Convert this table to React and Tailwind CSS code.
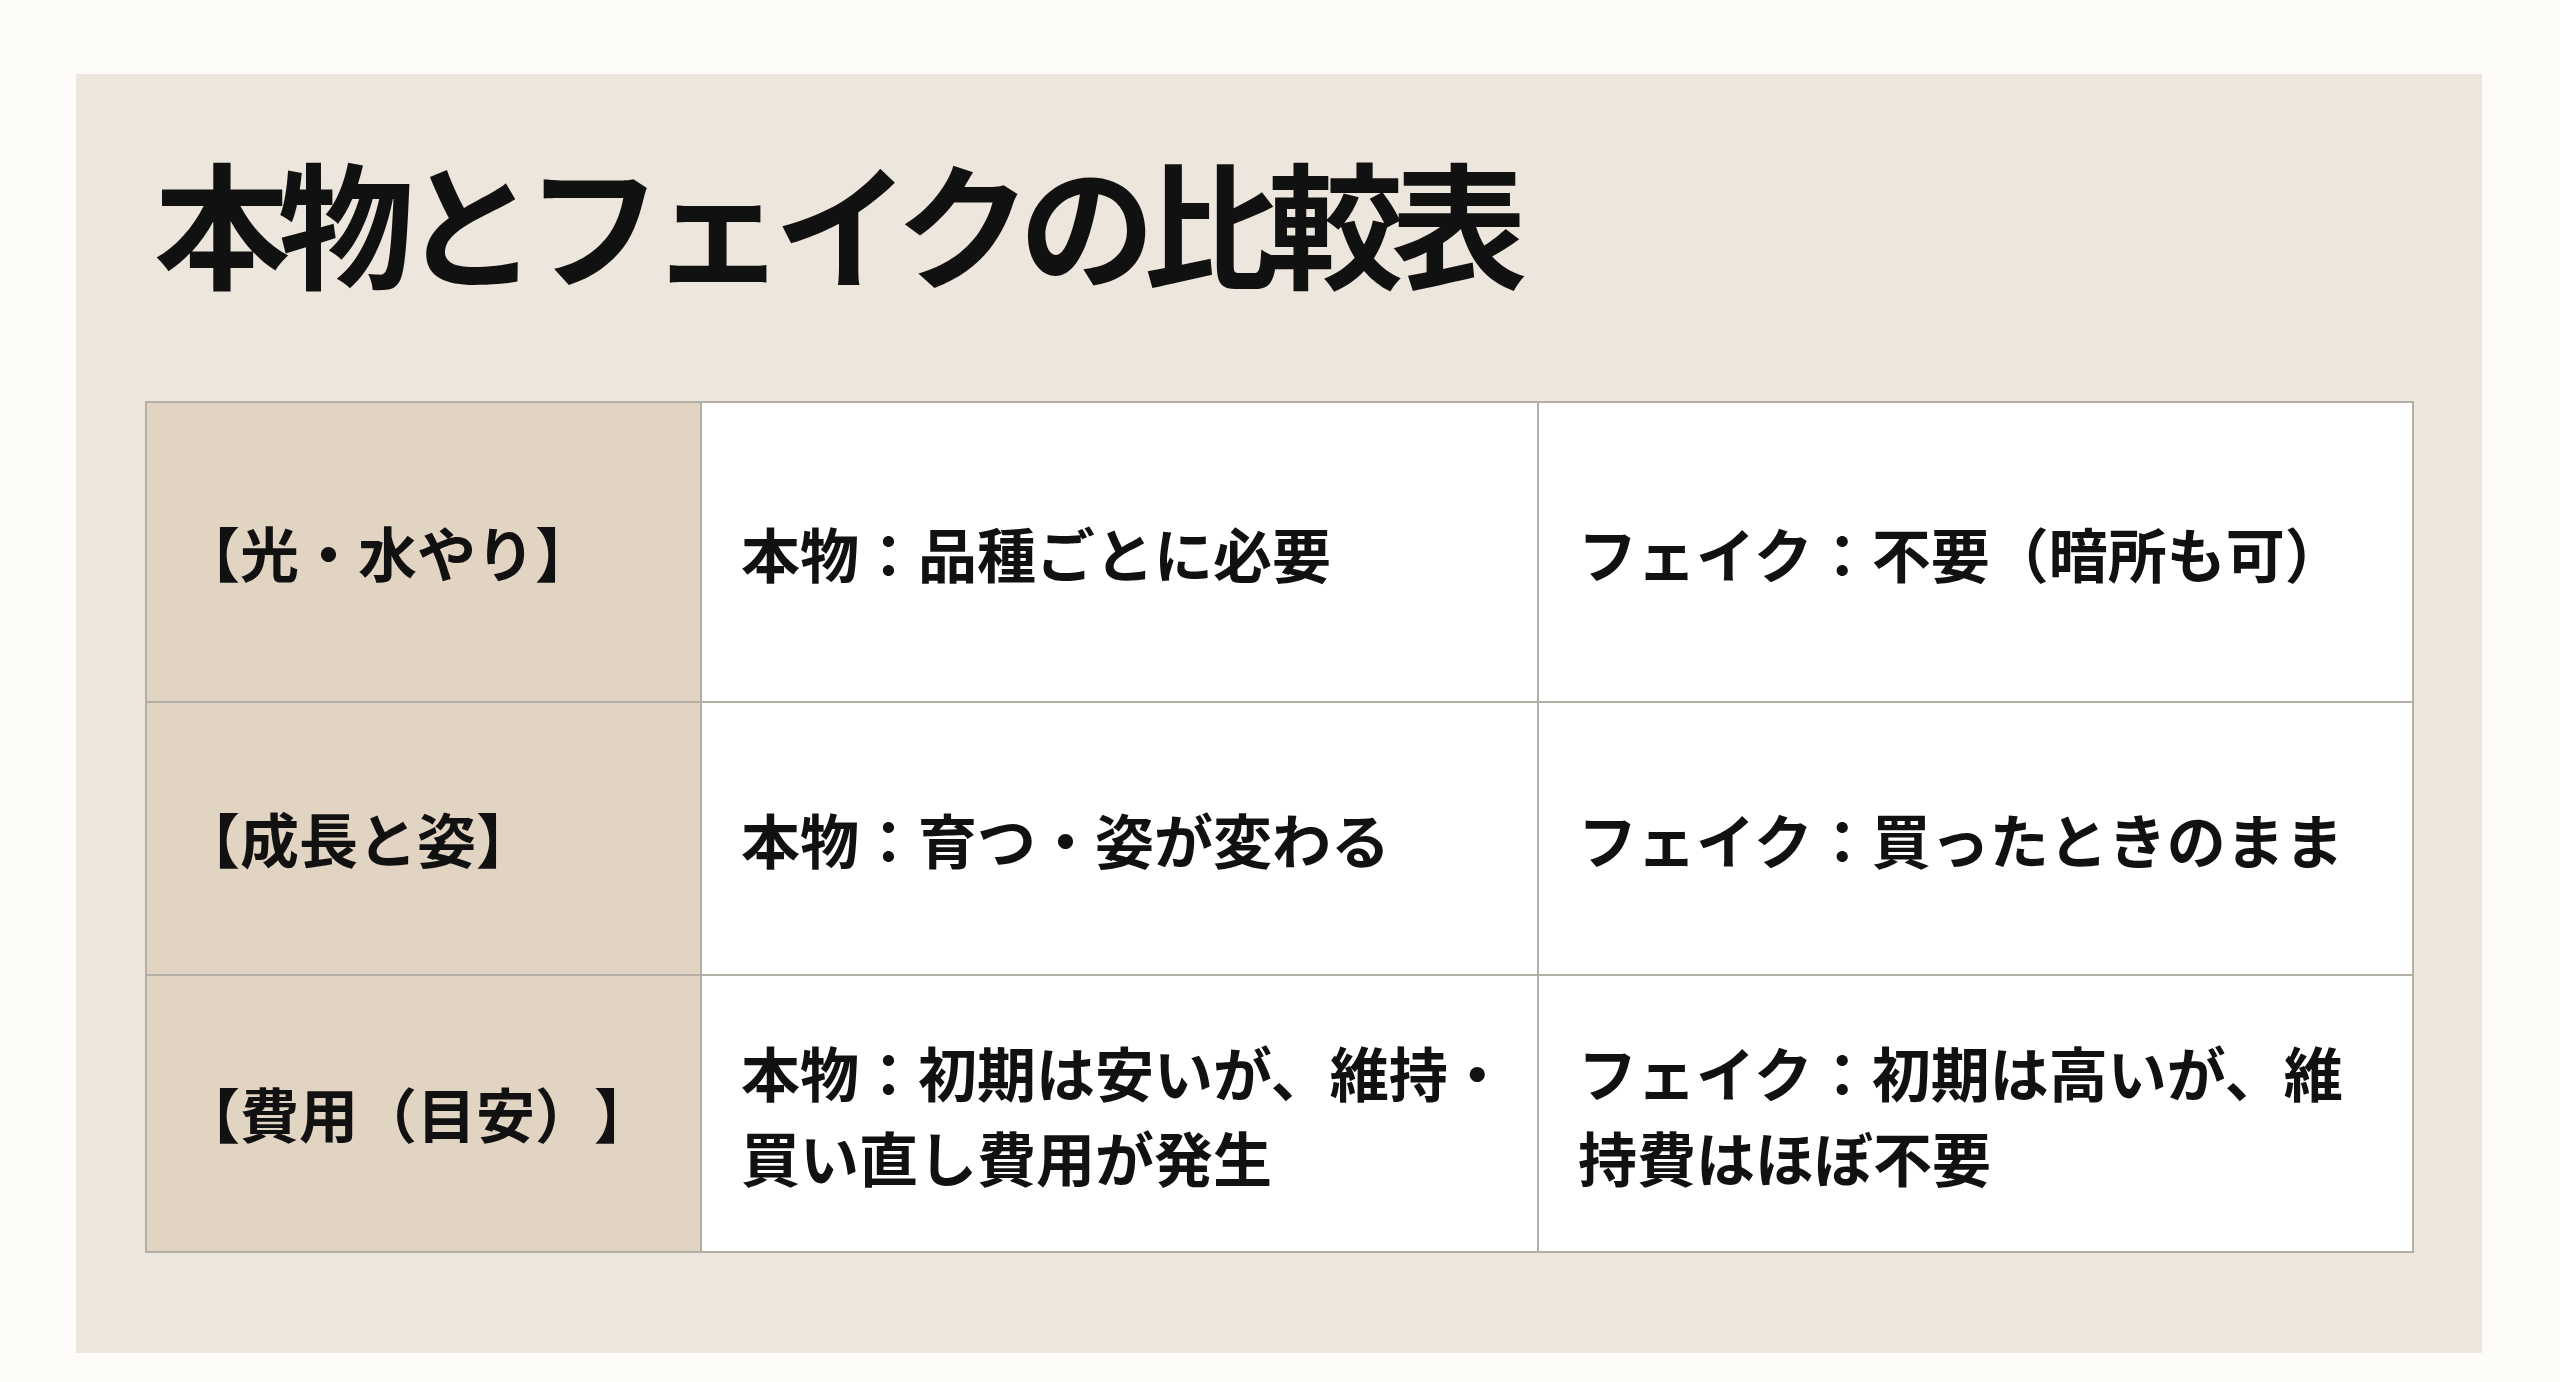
const ROWS = [
  {
    label: '【光・水やり】',
    real: ['本物：品種ごとに必要'],
    fake: ['フェイク：不要（暗所も可）'],
    h: 'h-[300px]',
  },
  {
    label: '【成長と姿】',
    real: ['本物：育つ・姿が変わる'],
    fake: ['フェイク：買ったときのまま'],
    h: 'h-[273px]',
  },
  {
    label: '【費用（目安）】',
    real: ['本物：初期は安いが、維持・', '買い直し費用が発生'],
    fake: ['フェイク：初期は高いが、維', '持費はほぼ不要'],
    h: 'h-[277px]',
  },
];

function Lines({ lines }) {
  return (
    <div className="leading-[85px]">
      {lines.map((l) => (
        <div key={l} className="whitespace-nowrap">
          {l}
        </div>
      ))}
    </div>
  );
}

export default function App() {
  return (
    <div
      className="min-h-screen w-full bg-[#fdfcf9] pl-[76px] pt-[74px] text-[#111] [text-spacing-trim:space-all]"
      style={{ fontFamily: '"Noto Sans CJK JP", "Noto Sans", sans-serif' }}
    >
      <section className="flex h-[1279px] w-[2406px] flex-col bg-[#ede6dc] px-[69px] pt-[78px]">
        <h1 className="pl-[9px] text-[136px] font-bold leading-none tracking-[-12px]">本物とフェイクの比較表</h1>

        <div className="mt-[113px] w-[2269px] border-l-2 border-t-2 border-[#b3aea6]">
          {ROWS.map((r) => (
            <div key={r.label} className={`grid grid-cols-[555px_837px_875px] ${r.h}`}>
              <div className="flex items-center border-b-2 border-r-2 border-[#b3aea6] bg-[#e2d4c2] pl-[34px] text-[59px] font-bold">
                {r.label}
              </div>
              <div className="flex items-center border-b-2 border-r-2 border-[#b3aea6] bg-white pl-[39px] text-[59px] font-bold">
                <Lines lines={r.real} />
              </div>
              <div className="flex items-center border-b-2 border-r-2 border-[#b3aea6] bg-white pl-[39px] text-[59px] font-bold">
                <Lines lines={r.fake} />
              </div>
            </div>
          ))}
        </div>
      </section>
    </div>
  );
}
